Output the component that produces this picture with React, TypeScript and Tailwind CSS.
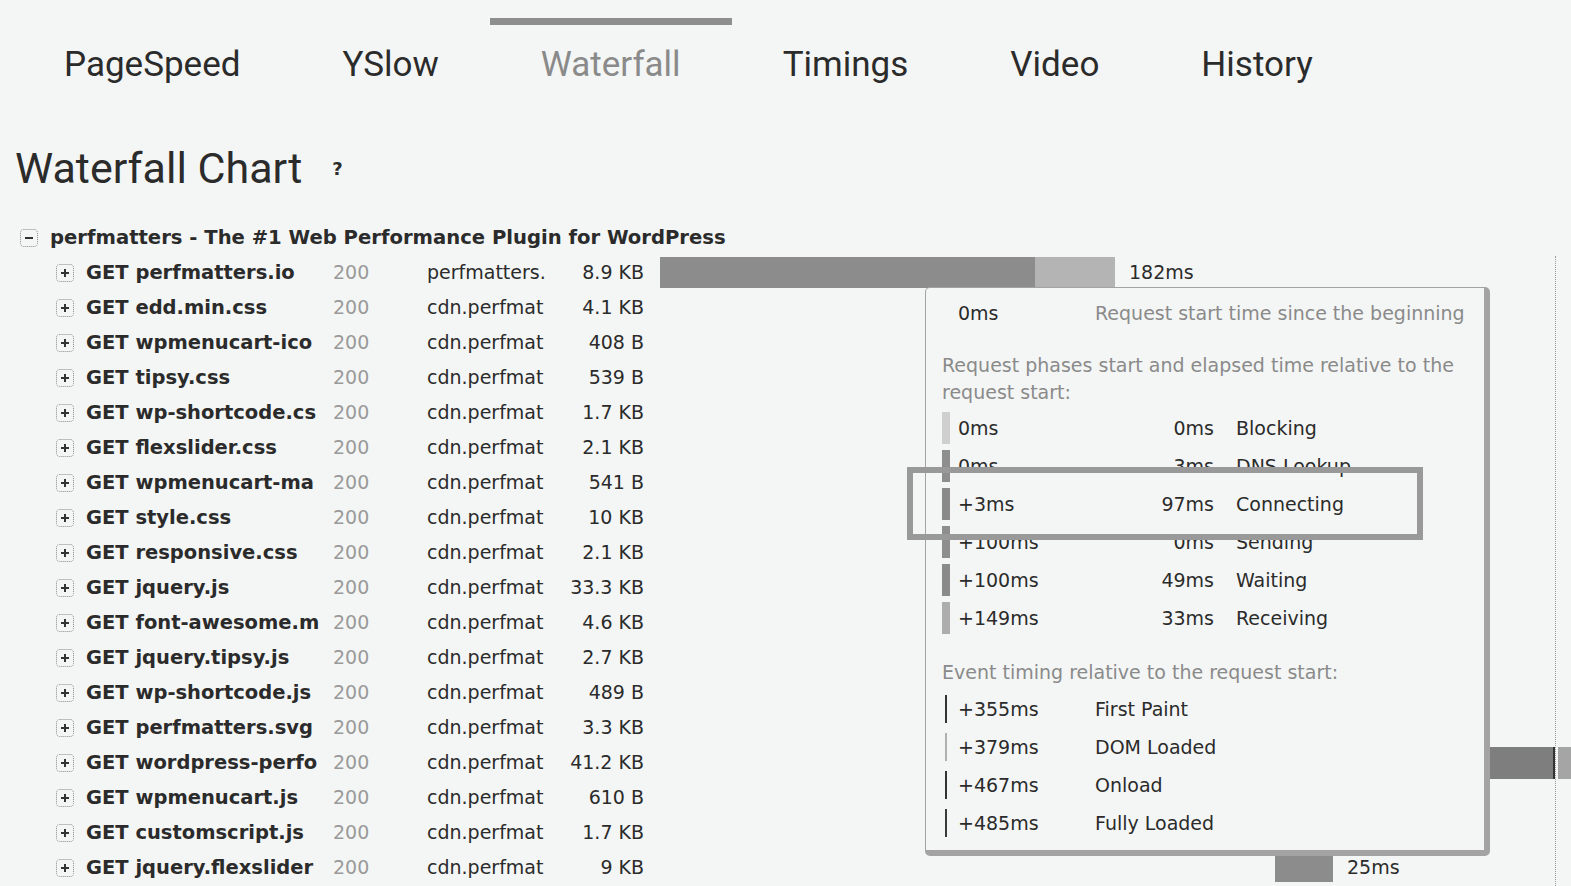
import React from 'react';

const tabs = ['PageSpeed', 'YSlow', 'Waterfall', 'Timings', 'Video', 'History'];

// names and hosts are shown as the clipped columns show them
const requests = [
  { name: 'GET perfmatters.io', domain: 'perfmatters.', size: '8.9 KB' },
  { name: 'GET edd.min.css', domain: 'cdn.perfmat', size: '4.1 KB' },
  { name: 'GET wpmenucart-ico', domain: 'cdn.perfmat', size: '408 B' },
  { name: 'GET tipsy.css', domain: 'cdn.perfmat', size: '539 B' },
  { name: 'GET wp-shortcode.cs', domain: 'cdn.perfmat', size: '1.7 KB' },
  { name: 'GET flexslider.css', domain: 'cdn.perfmat', size: '2.1 KB' },
  { name: 'GET wpmenucart-ma', domain: 'cdn.perfmat', size: '541 B' },
  { name: 'GET style.css', domain: 'cdn.perfmat', size: '10 KB' },
  { name: 'GET responsive.css', domain: 'cdn.perfmat', size: '2.1 KB' },
  { name: 'GET jquery.js', domain: 'cdn.perfmat', size: '33.3 KB' },
  { name: 'GET font-awesome.m', domain: 'cdn.perfmat', size: '4.6 KB' },
  { name: 'GET jquery.tipsy.js', domain: 'cdn.perfmat', size: '2.7 KB' },
  { name: 'GET wp-shortcode.js', domain: 'cdn.perfmat', size: '489 B' },
  { name: 'GET perfmatters.svg', domain: 'cdn.perfmat', size: '3.3 KB' },
  { name: 'GET wordpress-perfo', domain: 'cdn.perfmat', size: '41.2 KB' },
  { name: 'GET wpmenucart.js', domain: 'cdn.perfmat', size: '610 B' },
  { name: 'GET customscript.js', domain: 'cdn.perfmat', size: '1.7 KB' },
  { name: 'GET jquery.flexslider', domain: 'cdn.perfmat', size: '9 KB' },
];

const phases = [
  { start: '0ms', time: '0ms', label: 'Blocking', color: 'bg-[#cfcfcf]' },
  { start: '0ms', time: '3ms', label: 'DNS Lookup', color: 'bg-[#8e8e8e]' },
  { start: '+3ms', time: '97ms', label: 'Connecting', color: 'bg-[#8a8a8a]' },
  { start: '+100ms', time: '0ms', label: 'Sending', color: 'bg-[#8e8e8e]' },
  { start: '+100ms', time: '49ms', label: 'Waiting', color: 'bg-[#8a8a8a]' },
  { start: '+149ms', time: '33ms', label: 'Receiving', color: 'bg-[#adadad]' },
];

const events = [
  { time: '+355ms', label: 'First Paint', color: 'bg-[#333]' },
  { time: '+379ms', label: 'DOM Loaded', color: 'bg-[#b0b0b0]' },
  { time: '+467ms', label: 'Onload', color: 'bg-[#333]' },
  { time: '+485ms', label: 'Fully Loaded', color: 'bg-[#3a3a3a]' },
];

function ExpandIcon({ open }: { open?: boolean }) {
  return (
    <svg width="18" height="18" viewBox="0 0 18 18" className="shrink-0">
      <rect x="0.5" y="0.5" width="17" height="17" rx="3" fill="#f4f6f5" stroke="#888" strokeDasharray="1 1" />
      <path d={open ? 'M5 9h8' : 'M5 9h8M9 5v8'} stroke="#333" strokeWidth="2" />
    </svg>
  );
}

function Bar({ index }: { index: number }) {
  if (index === 0) {
    return (
      <div className="flex items-center">
        <div className="h-[31px] w-[375px] bg-[#8c8c8c]" />
        <div className="h-[31px] w-[80px] bg-[#b4b4b4]" />
        <span className="ml-[14px]">182ms</span>
      </div>
    );
  }
  if (index === 14) {
    return (
      <div className="ml-[825px] flex items-center">
        <div className="h-[32px] w-[68px] bg-[#7e7e7e]" />
        <div className="h-[32px] w-[2px] bg-[#333]" />
        <div className="ml-[3px] h-[32px] w-[20px] bg-[#a5a5a5]" />
      </div>
    );
  }
  if (index === 17) {
    return (
      <div className="ml-[615px] flex items-center">
        <div className="h-[29px] w-[58px] bg-[#8c8c8c]" />
        <span className="ml-[14px]">25ms</span>
      </div>
    );
  }
  return null;
}

export default function App() {
  return (
    <div className="relative h-[886px] w-full overflow-hidden bg-[#f4f6f5] font-['DejaVu_Sans',sans-serif] text-[19px] text-[#2b2b2b]">
      {/* Tabs */}
      <div className="ml-[13px] mt-[18px] flex font-['Roboto',sans-serif] text-[35px]">
        {tabs.map((tab) => (
          <div
            key={tab}
            className={
              tab === 'Waterfall'
                ? 'border-t-[7px] border-[#8e8e8e] px-[51px] pt-[20px] leading-[40px] text-[#8a8a8a]'
                : 'border-t-[7px] border-transparent px-[51px] pt-[20px] leading-[40px] text-[#2b2b2b]'
            }
          >
            {tab}
          </div>
        ))}
      </div>

      {/* Heading */}
      <div className="ml-[15px] mt-[58px] flex items-center">
        <h1 className="font-['Roboto',sans-serif] text-[43px] leading-[50px]">Waterfall Chart</h1>
        <span className="ml-[30px] text-[18px] font-bold">?</span>
      </div>

      {/* Group header */}
      <div className="mt-[27px] flex h-[35px] items-center pl-[20px]">
        <ExpandIcon open />
        <span className="ml-[12px] whitespace-nowrap text-[19.6px] font-bold">
          perfmatters - The #1 Web Performance Plugin for WordPress
        </span>
      </div>

      {/* Requests */}
      {requests.map((r, i) => (
        <div key={i} className="flex h-[35px] items-center whitespace-nowrap pl-[56px]">
          <ExpandIcon />
          <div className="ml-[12px] w-[233px] shrink-0 overflow-hidden text-[19.5px] font-bold">{r.name}</div>
          <div className="ml-[14px] w-[94px] shrink-0 text-[#9a9a9a]">200</div>
          <div className="w-[118px] shrink-0 overflow-hidden">{r.domain}</div>
          <div className="w-[99px] shrink-0 text-right">{r.size}</div>
          <div className="ml-[16px] flex items-center">
            <Bar index={i} />
          </div>
        </div>
      ))}

      {/* chart marker line */}
      <div className="absolute bottom-0 left-[1555px] top-[256px] border-l border-dotted border-[#9a9a9a]" />

      {/* Tooltip */}
      <div className="absolute left-[925px] top-[287px] h-[569px] w-[565px] rounded-[5px] border-b-[6px] border-l border-r-[6px] border-t border-[#a3a3a3] bg-[#f4f6f5] pl-[16px] pr-[8px] pt-[6px]">
        <div className="flex h-[38px] items-center">
          <span className="ml-[16px] w-[137px]">0ms</span>
          <span className="text-[#8a8a8a]">Request start time since the beginning</span>
        </div>
        <p className="mt-[20px] leading-[27px] text-[#8a8a8a]">
          Request phases start and elapsed time relative to the request start:
        </p>
        <div className="mt-[3px]">
          {phases.map((p) => (
            <div key={p.label} className="flex h-[38px] items-center">
              <div className={`h-[32px] w-[8px] ${p.color}`} />
              <span className="ml-[8px] w-[160px]">{p.start}</span>
              <span className="w-[96px] text-right">{p.time}</span>
              <span className="ml-[22px]">{p.label}</span>
            </div>
          ))}
        </div>
        <p className="mt-[22px] leading-[27px] text-[#8a8a8a]">Event timing relative to the request start:</p>
        <div className="mt-[4px]">
          {events.map((e) => (
            <div key={e.label} className="flex h-[38px] items-center">
              <div className={`ml-[3px] h-[28px] w-[2px] ${e.color}`} />
              <span className="ml-[11px] w-[137px]">{e.time}</span>
              <span>{e.label}</span>
            </div>
          ))}
        </div>
      </div>

      {/* highlight annotation */}
      <div className="absolute left-[907px] top-[467px] h-[73px] w-[516px] border-[6px] border-[#999]" />
    </div>
  );
}
